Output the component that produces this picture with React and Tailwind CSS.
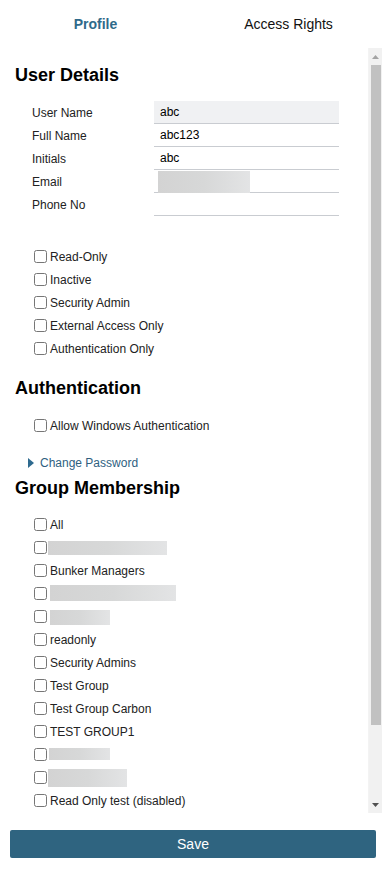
const groups = [
  { label: "All" },
  { blur: "w-[119px] h-[14px] mt-[1px] -ml-[2px]" },
  { label: "Bunker Managers" },
  { blur: "w-[126px] h-[16px] -mt-[2px]" },
  { blur: "w-[60px] h-[15px] mt-[2px]" },
  { label: "readonly" },
  { label: "Security Admins" },
  { label: "Test Group" },
  { label: "Test Group Carbon" },
  { label: "TEST GROUP1" },
  { blur: "w-[61px] h-[12px] -mt-[1px] -ml-[1px]" },
  { blur: "w-[79px] h-[18px] mt-[1px] -ml-[2px]" },
  { label: "Read Only test (disabled)" },
];

const flags = ["Read-Only", "Inactive", "Security Admin", "External Access Only", "Authentication Only"];

const fields = [
  { label: "User Name", value: "abc", readOnly: true },
  { label: "Full Name", value: "abc123" },
  { label: "Initials", value: "abc" },
  { label: "Email", blur: true },
  { label: "Phone No", value: "" },
];

function Check({ children }) {
  return (
    <label className="flex items-center h-[23px] pl-[4px] text-[12px] leading-[14px] text-[#222]">
      <input type="checkbox" className="m-0 mr-[3px] w-[13px] h-[13px] shrink-0" />
      {children}
    </label>
  );
}

function Blur({ className }) {
  return <span className={"block bg-gradient-to-r from-[#d3d3d3] via-[#d7d8d8] to-[#e3e4e5] " + className}></span>;
}

function Heading({ children, className }) {
  return <h3 className={"text-[18px] leading-[21px] font-bold text-black " + className}>{children}</h3>;
}

export default function App() {
  return (
    <div className="w-[382px] h-[878px] flex flex-col bg-white" style={{ fontFamily: '"Liberation Sans", Arial, sans-serif' }}>
      <div className="h-12 flex shrink-0 text-[14px]">
        <div className="flex-1 flex items-center justify-center pl-[2px] font-bold text-[#2f6a8a]">Profile</div>
        <div className="flex-1 flex items-center justify-center pl-[6px] text-[#111]">Access Rights</div>
      </div>

      <div className="h-[765px] flex shrink-0">
        <div className="flex-1 overflow-hidden pl-[15px] border-r border-[#f3f3f3]">
          <Heading className="mt-[17px] mb-[15px]">User Details</Heading>

          <div className="ml-[17px] w-[307px]">
            {fields.map((f) => (
              <div key={f.label} className="flex h-[23px] text-[12px]">
                <div className="w-[122px] flex items-center text-[#222]">{f.label}</div>
                <div
                  className={
                    "flex-1 flex items-center pl-[6px] border-b border-[#c9ccd1] text-black " +
                    (f.readOnly ? "bg-[#f0f1f3]" : "bg-white")
                  }
                >
                  {f.blur ? <Blur className="w-[92px] h-[22px] -ml-[2px] mt-[1px]" /> : f.value}
                </div>
              </div>
            ))}
          </div>

          <div className="mt-[29px] ml-[15px]">
            {flags.map((t) => (
              <Check key={t}>{t}</Check>
            ))}
          </div>

          <Heading className="mt-[18px] mb-[15px]">Authentication</Heading>
          <div className="ml-[15px]">
            <Check>Allow Windows Authentication</Check>
          </div>

          <div className="mt-[17px] h-[18px] flex items-center pl-[13px] text-[12px] text-[#2f5f7f]">
            <svg width="6" height="10" viewBox="0 0 6 10" className="mr-[6px]">
              <path d="M0 0 L6 5 L0 10 Z" fill="#2e6a8f" />
            </svg>
            Change Password
          </div>

          <Heading className="mt-[6px] mb-[14px]">Group Membership</Heading>
          <div className="ml-[15px]">
            {groups.map((g, i) => (
              <Check key={i}>{g.label ? g.label : <Blur className={g.blur} />}</Check>
            ))}
          </div>
        </div>

        <div className="w-[13px] shrink-0 bg-[#f1f1f1] flex flex-col items-center">
          <div className="h-[17px] w-full flex items-center justify-center">
            <svg width="7" height="4" viewBox="0 0 7 4">
              <path d="M0 4 L3.5 0 L7 4 Z" fill="#a3a3a3" />
            </svg>
          </div>
          <div className="w-[10px] h-[660px] bg-[#c1c1c1] ml-[1px]"></div>
          <div className="flex-1"></div>
          <div className="h-[17px] w-full flex items-center justify-center">
            <svg width="7" height="4" viewBox="0 0 7 4">
              <path d="M0 0 L7 0 L3.5 4 Z" fill="#505050" />
            </svg>
          </div>
        </div>
      </div>

      <div className="pt-[17px] pl-[10px] pr-[6px]">
        <button className="w-full h-[28px] rounded-[2px] bg-[#2f6480] text-white text-[14px] flex items-center justify-center">
          Save
        </button>
      </div>
    </div>
  );
}
